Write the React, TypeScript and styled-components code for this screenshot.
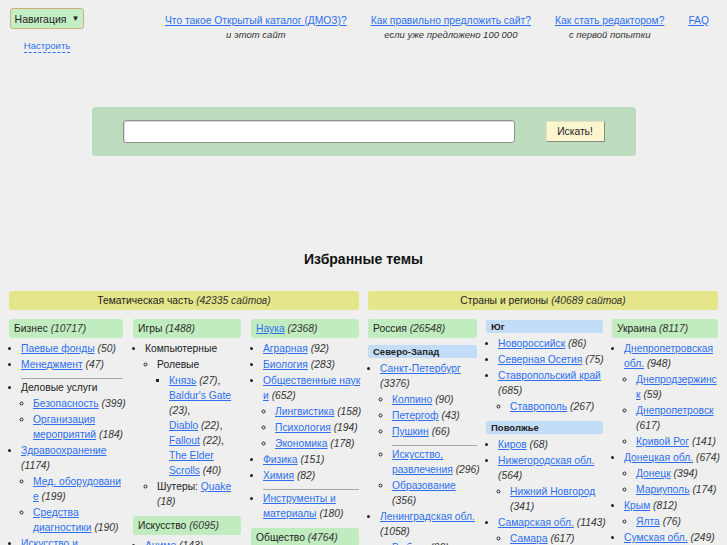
import React from 'react';
import styled, { createGlobalStyle } from 'styled-components';

const GlobalStyle = createGlobalStyle`
  html, body {
    margin: 0;
    padding: 0;
    background: #efefef;
  }
  body {
    font-family: "Liberation Sans", Arial, sans-serif;
    font-size: 10.3px;
    color: #222;
  }
`;

const Page = styled.div`
  padding: 8px 9px 0;
`;

const Header = styled.div`
  display: flex;
  justify-content: space-between;
  align-items: flex-start;
`;

const NavCol = styled.div`
  display: flex;
  flex-direction: column;
  align-items: center;
  margin-left: 1px;
  width: 74px;
`;

const NavButton = styled.div`
  box-sizing: border-box;
  width: 74px;
  height: 21px;
  display: flex;
  align-items: center;
  justify-content: center;
  gap: 5px;
  font-size: 10.5px;
  background: #c6eec6;
  border: 1px solid #cfb07a;
  border-radius: 3px;
  color: #222;
`;

const Arrow = styled.span`
  font-size: 8px;
`;

const Setup = styled.a`
  margin-top: 11px;
  line-height: 12px;
  font-size: 9.5px;
  color: #2d6ff0;
  text-decoration: none;
  border-bottom: 1px dashed #2d6ff0;
`;

const TopLinks = styled.div`
  display: flex;
  gap: 24px;
  margin-top: 6px;
  padding-right: 9px;
`;

const TopItem = styled.div`
  display: flex;
  flex-direction: column;
  align-items: center;
`;

const Link = styled.a`
  color: #2d6ff0;
  text-decoration: underline;
`;

const TopLink = styled(Link)`
  line-height: 13px;
`;

const Hint = styled.i`
  margin-top: 2px;
  font-size: 9.5px;
  line-height: 12px;
  color: #333;
`;

const SearchBox = styled.form`
  box-sizing: border-box;
  width: 544px;
  height: 49px;
  margin: 54px auto 0;
  padding: 0 31px;
  display: flex;
  align-items: center;
  gap: 31px;
  background: #bddcbd;
  border-radius: 4px;
`;

const SearchInput = styled.input`
  box-sizing: border-box;
  width: 392px;
  height: 23px;
  border: 1px solid #8c958c;
  border-radius: 3px;
  background: #fff;
  box-shadow: inset 1px 1px 1px rgba(0, 0, 0, 0.15);
`;

const SearchButton = styled.button`
  box-sizing: border-box;
  width: 59px;
  height: 21px;
  padding: 0;
  font-family: inherit;
  font-size: 10.3px;
  color: #222;
  background: #fcf6cf;
  border: 1px solid;
  border-color: #e6e0c0 #8a8a80 #8a8a80 #e6e0c0;
`;

const Title = styled.h2`
  margin: 94px 0 0;
  text-align: center;
  font-size: 14px;
  line-height: 18px;
  color: #111;
`;

const Sections = styled.div`
  display: grid;
  grid-template-columns: 1fr 1fr;
  column-gap: 9px;
  margin-top: 23px;
`;

const Bar = styled.div`
  height: 19px;
  line-height: 19px;
  text-align: center;
  background: #e5e589;
  border-radius: 3px;
  margin-bottom: 9px;
`;

const Cols = styled.div<{ $cols: string; $gap: number }>`
  display: grid;
  grid-template-columns: ${p => p.$cols};
  column-gap: ${p => p.$gap}px;
  align-items: start;
`;

const Col = styled.div`
  min-width: 0;
`;

const ColHead = styled.div`
  height: 19px;
  line-height: 19px;
  padding-left: 5px;
  background: #c1ecbf;
  border-radius: 3px;
  white-space: nowrap;
  margin-top: 7px;
  &:first-child {
    margin-top: 0;
  }
`;

const SubHead = styled.div`
  height: 13px;
  line-height: 13px;
  padding-left: 5px;
  font-size: 9.5px;
  font-weight: bold;
  background: #c3ddf8;
  border-radius: 2px;
  margin-top: 7px;
  &:first-child {
    margin-top: 1px;
  }
`;

const List = styled.ul<{ $lvl: number }>`
  margin: ${p => (p.$lvl === 1 ? '3px 0 0' : '0')};
  padding: 0 0 0 12px;
  list-style-type: ${p => ['disc', 'circle', 'square'][p.$lvl - 1]};
`;

const Item = styled.li`
  margin-top: 1px;
  line-height: 15px;
  white-space: nowrap;
`;

const HrItem = styled.li`
  list-style: none;
  height: 1px;
  margin-top: 6px;
  background: #a8a8a8;
`;

const Count = styled.i`
  color: #333;
`;

type Entry = {
  t?: string;
  n?: number;
  nb?: boolean;
  plain?: boolean;
  pre?: string;
  hr?: boolean;
  raw?: React.ReactNode;
  kids?: Entry[];
};

type Block =
  | { kind: 'head'; t: string; n: number; link?: boolean }
  | { kind: 'sub'; t: string }
  | { kind: 'list'; items: Entry[] };

const lines = (t: string) =>
  t.split('\n').map((l, i) => (
    <React.Fragment key={i}>
      {i > 0 && <br />}
      {l}
    </React.Fragment>
  ));

const games = (
  <>
    <Link href="#">Князь</Link> <Count>(27)</Count>,<br />
    <Link href="#">Baldur's Gate</Link>
    <br />
    <Count>(23)</Count>,<br />
    <Link href="#">Diablo</Link> <Count>(22)</Count>,<br />
    <Link href="#">Fallout</Link> <Count>(22)</Count>,<br />
    <Link href="#">
      The Elder
      <br />
      Scrolls
    </Link>{' '}
    <Count>(40)</Count>
  </>
);

function Entries({ items, lvl }: { items: Entry[]; lvl: number }) {
  return (
    <List $lvl={lvl}>
      {items.map((e, i) => {
        if (e.hr) return <HrItem key={i} />;
        return (
          <Item key={i}>
            {e.raw}
            {e.pre}
            {e.t !== undefined && (e.plain ? lines(e.t) : <Link href="#">{lines(e.t)}</Link>)}
            {e.n !== undefined && (
              <>
                {e.nb ? <br /> : ' '}
                <Count>({e.n})</Count>
              </>
            )}
            {e.kids && <Entries items={e.kids} lvl={lvl + 1} />}
          </Item>
        );
      })}
    </List>
  );
}

function Column({ blocks }: { blocks: Block[] }) {
  return (
    <Col>
      {blocks.map((b, i) => {
        if (b.kind === 'head')
          return (
            <ColHead key={i}>
              {b.link ? <Link href="#">{b.t}</Link> : b.t} <Count>({b.n})</Count>
            </ColHead>
          );
        if (b.kind === 'sub') return <SubHead key={i}>{b.t}</SubHead>;
        return <Entries key={i} items={b.items} lvl={1} />;
      })}
    </Col>
  );
}

const left: Block[][] = [
  [
    { kind: 'head', t: 'Бизнес', n: 10717 },
    {
      kind: 'list',
      items: [
        { t: 'Паевые фонды', n: 50 },
        { t: 'Менеджмент', n: 47 },
        { hr: true },
        {
          t: 'Деловые услуги',
          plain: true,
          kids: [
            { t: 'Безопасность', n: 399 },
            { t: 'Организация\nмероприятий', n: 184 },
          ],
        },
        {
          t: 'Здравоохранение',
          n: 1174,
          nb: true,
          kids: [
            { t: 'Мед. оборудовани\nе', n: 199 },
            { t: 'Средства\nдиагностики', n: 190 },
          ],
        },
        { t: 'Искусство и\nразвлечения', n: 512 },
      ],
    },
  ],
  [
    { kind: 'head', t: 'Игры', n: 1488 },
    {
      kind: 'list',
      items: [
        {
          t: 'Компьютерные',
          plain: true,
          kids: [
            { t: 'Ролевые', plain: true, kids: [{ raw: games }] },
            { pre: 'Шутеры: ', t: 'Quake', n: 18, nb: true },
          ],
        },
      ],
    },
    { kind: 'head', t: 'Искусство', n: 6095 },
    {
      kind: 'list',
      items: [
        { t: 'Аниме', n: 143 },
        { t: 'Кино', n: 420 },
      ],
    },
  ],
  [
    { kind: 'head', t: 'Наука', n: 2368, link: true },
    {
      kind: 'list',
      items: [
        { t: 'Аграрная', n: 92 },
        { t: 'Биология', n: 283 },
        {
          t: 'Общественные наук\nи',
          n: 652,
          kids: [
            { t: 'Лингвистика', n: 158 },
            { t: 'Психология', n: 194 },
            { t: 'Экономика', n: 178 },
          ],
        },
        { t: 'Физика', n: 151 },
        { t: 'Химия', n: 82 },
        { hr: true },
        { t: 'Инструменты и\nматериалы', n: 180 },
      ],
    },
    { kind: 'head', t: 'Общество', n: 4764 },
    { kind: 'list', items: [{ t: 'Религия', n: 310 }] },
  ],
];

const right: Block[][] = [
  [
    { kind: 'head', t: 'Россия', n: 26548 },
    { kind: 'sub', t: 'Северо-Запад' },
    {
      kind: 'list',
      items: [
        {
          t: 'Санкт-Петербург',
          n: 3376,
          nb: true,
          kids: [
            { t: 'Колпино', n: 90 },
            { t: 'Петергоф', n: 43 },
            { t: 'Пушкин', n: 66 },
            { hr: true },
            { t: 'Искусство,\nразвлечения', n: 296 },
            { t: 'Образование', n: 356, nb: true },
          ],
        },
        {
          t: 'Ленинградская обл.',
          n: 1058,
          nb: true,
          kids: [{ t: 'Выборг', n: 90 }],
        },
      ],
    },
  ],
  [
    { kind: 'sub', t: 'Юг' },
    {
      kind: 'list',
      items: [
        { t: 'Новороссийск', n: 86 },
        { t: 'Северная Осетия', n: 75 },
        {
          t: 'Ставропольский край',
          n: 685,
          nb: true,
          kids: [{ t: 'Ставрополь', n: 267 }],
        },
      ],
    },
    { kind: 'sub', t: 'Поволжье' },
    {
      kind: 'list',
      items: [
        { t: 'Киров', n: 68 },
        {
          t: 'Нижегородская обл.',
          n: 564,
          nb: true,
          kids: [{ t: 'Нижний Новгород', n: 341, nb: true }],
        },
        {
          t: 'Самарская обл.',
          n: 1143,
          kids: [{ t: 'Самара', n: 617 }],
        },
      ],
    },
  ],
  [
    { kind: 'head', t: 'Украина', n: 8117 },
    {
      kind: 'list',
      items: [
        {
          t: 'Днепропетровская\nобл.',
          n: 948,
          kids: [
            { t: 'Днепродзержинс\nк', n: 59 },
            { t: 'Днепропетровск', n: 617, nb: true },
            { t: 'Кривой Рог', n: 141 },
          ],
        },
        {
          t: 'Донецкая обл.',
          n: 674,
          kids: [
            { t: 'Донецк', n: 394 },
            { t: 'Мариуполь', n: 174 },
          ],
        },
        { t: 'Крым', n: 812, kids: [{ t: 'Ялта', n: 76 }] },
        { t: 'Сумская обл.', n: 249 },
      ],
    },
  ],
];

const topLinks = [
  { t: 'Что такое Открытый каталог (ДМОЗ)?', hint: 'и этот сайт' },
  { t: 'Как правильно предложить сайт?', hint: 'если уже предложено 100 000' },
  { t: 'Как стать редактором?', hint: 'с первой попытки' },
  { t: 'FAQ' },
];

export default function App() {
  return (
    <Page>
      <GlobalStyle />
      <Header>
        <NavCol>
          <NavButton>
            Навигация <Arrow>▼</Arrow>
          </NavButton>
          <Setup href="#">Настроить</Setup>
        </NavCol>
        <TopLinks>
          {topLinks.map(l => (
            <TopItem key={l.t}>
              <TopLink href="#">{l.t}</TopLink>
              {l.hint && <Hint>{l.hint}</Hint>}
            </TopItem>
          ))}
        </TopLinks>
      </Header>

      <SearchBox onSubmit={e => e.preventDefault()}>
        <SearchInput type="text" />
        <SearchButton type="submit">Искать!</SearchButton>
      </SearchBox>

      <Title>Избранные темы</Title>

      <Sections>
        <div>
          <Bar>
            Тематическая часть <Count>(42335 сайтов)</Count>
          </Bar>
          <Cols $cols="114px 108px 1fr" $gap={10}>
            {left.map((c, i) => (
              <Column key={i} blocks={c} />
            ))}
          </Cols>
        </div>
        <div>
          <Bar>
            Страны и регионы <Count>(40689 сайтов)</Count>
          </Bar>
          <Cols $cols="109px 117px 1fr" $gap={9}>
            {right.map((c, i) => (
              <Column key={i} blocks={c} />
            ))}
          </Cols>
        </div>
      </Sections>
    </Page>
  );
}
